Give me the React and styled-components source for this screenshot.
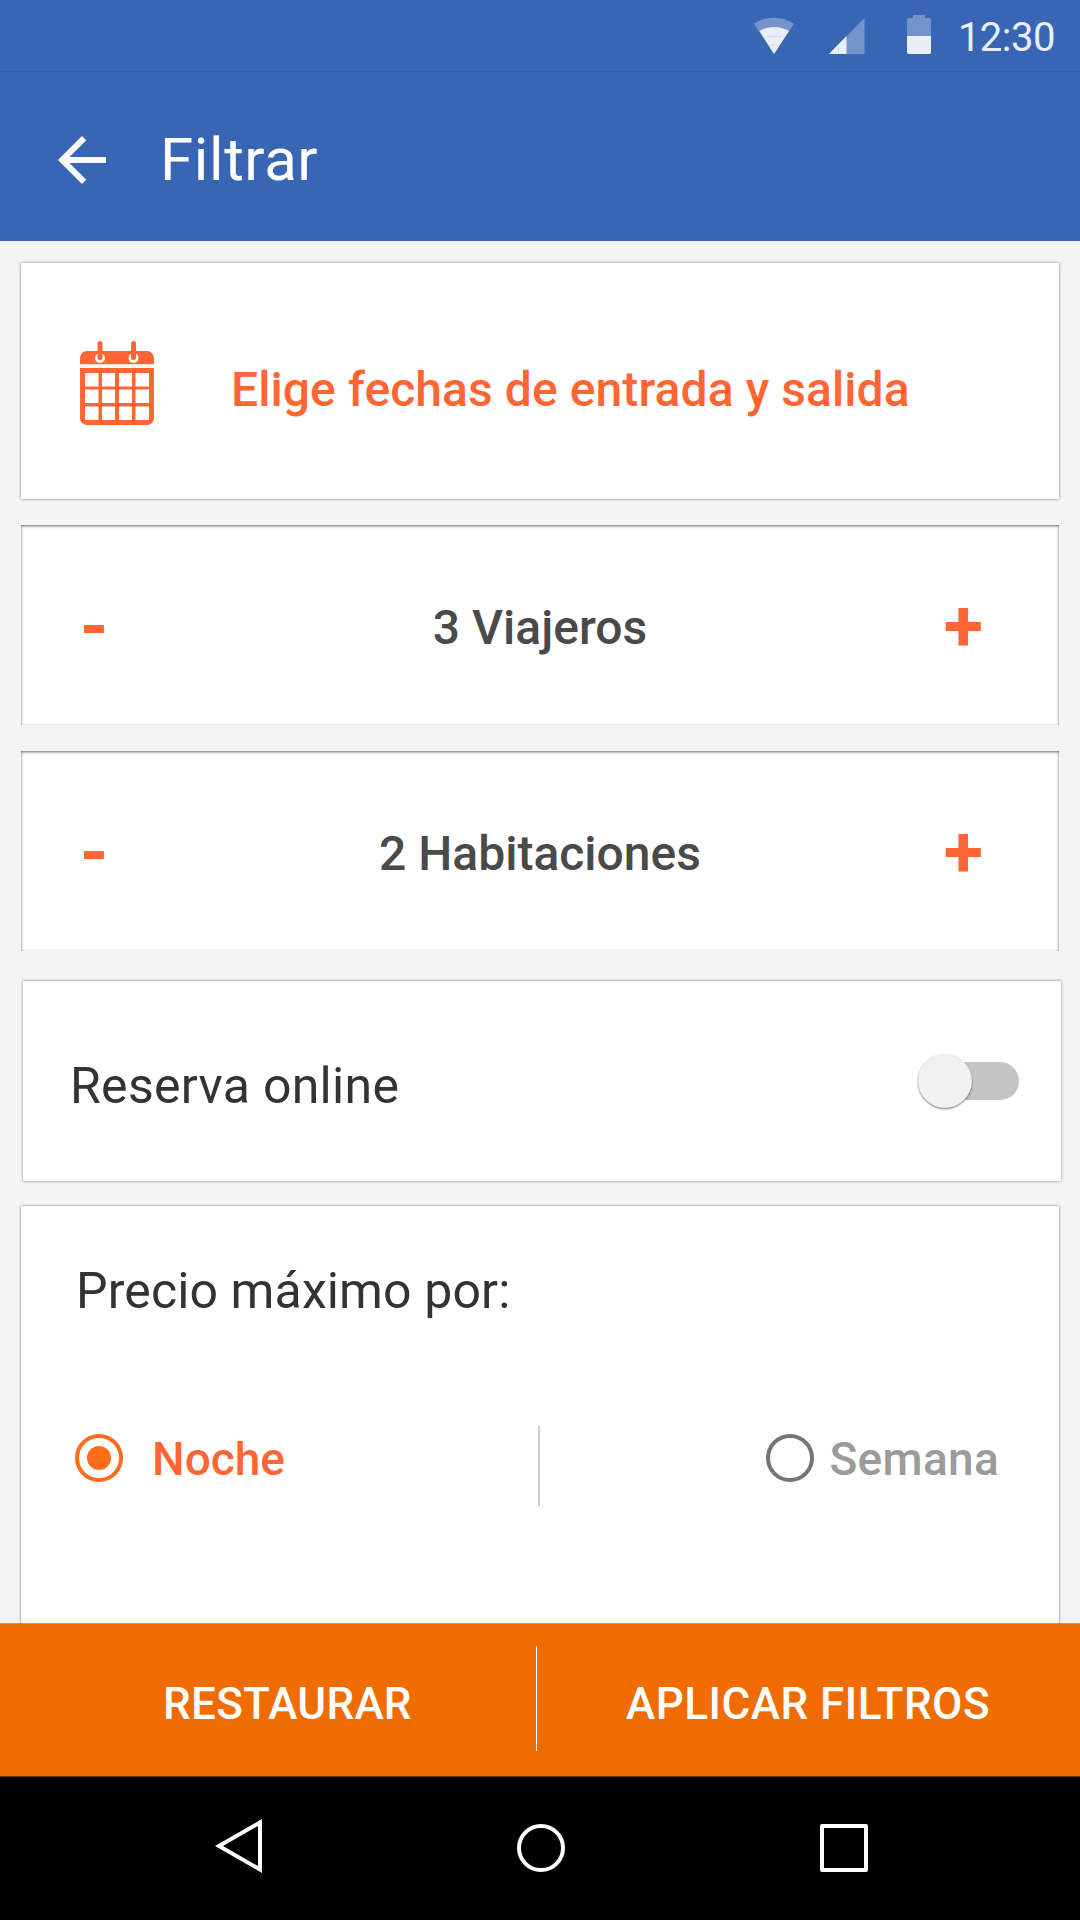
import React, { useState } from 'react';
import styled, { createGlobalStyle } from 'styled-components';

const GlobalStyle = createGlobalStyle`
  * {
    box-sizing: border-box;
  }

  body {
    margin: 0;
    font-family: Roboto, sans-serif;
  }

  button {
    padding: 0;
    border: none;
    background: none;
    font-family: inherit;
    cursor: pointer;
  }

  svg {
    display: block;
  }
`;

const Screen = styled.div`
  width: 1080px;
  height: 1920px;
  display: flex;
  flex-direction: column;
  background: #f4f4f4;
  overflow: hidden;
`;

const StatusBar = styled.div`
  flex: none;
  height: 72px;
  display: flex;
  align-items: flex-start;
  justify-content: flex-end;
  padding-right: 25px;
  background: #3966b4;
  border-bottom: 1px solid #305ba9;
`;

const StatusIcons = styled.svg`
  width: 177px;
  height: 60px;
  margin-right: 27px;
`;

const Clock = styled.span`
  color: #e9eef7;
  font-size: 40px;
  line-height: 48px;
  letter-spacing: -0.5px;
  margin-top: 14px;
`;

const AppBar = styled.header`
  flex: none;
  height: 169px;
  display: flex;
  align-items: center;
  padding: 5px 46px 0;
  background: #3966b4;
`;

const BackButton = styled.button`
  width: 72px;
  height: 72px;
  margin: 2px 42px 0 0;
`;

const Title = styled.h1`
  margin: 0;
  color: #fff;
  font-size: 60px;
  font-weight: 400;
  letter-spacing: 0.6px;
`;

const Content = styled.main`
  flex: 1;
  min-height: 0;
  padding: 22px 21px 0;
  overflow: hidden;
`;

const Card = styled.section`
  background: #fff;
  border-radius: 1px;
  box-shadow: 0 0 3px rgba(0, 0, 0, 0.5);
`;

const DatesCard = styled(Card)`
  height: 236px;
  display: flex;
  align-items: flex-start;
  padding: 78px 59px 0;
`;

const DatesLabel = styled.span`
  margin: 21px 0 0 77px;
  color: #ff6633;
  font-size: 48px;
  font-weight: 500;
  line-height: 56px;
  letter-spacing: 0.08px;
`;

const StepperCard = styled.section`
  height: 200px;
  margin-top: 26px;
  display: grid;
  grid-template-columns: 1fr auto 1fr;
  align-items: center;
  padding: 4px 59px 0;
  background: #fff;
  box-shadow: inset 0 1px 3px rgba(0, 0, 0, 0.6);
`;

const StepButton = styled.button`
  justify-self: ${({ $end }) => ($end ? 'end' : 'start')};
  margin-right: ${({ $end }) => ($end ? '17px' : 0)};
  color: #ff6633;
  font-size: 72px;
  font-weight: 700;
  line-height: 84px;
`;

const StepValue = styled.span`
  color: #4a4a4a;
  font-size: 48px;
  font-weight: 500;
`;

const SwitchCard = styled(Card)`
  height: 200px;
  margin: 30px -2px 0 2px;
  display: flex;
  align-items: center;
  justify-content: space-between;
  padding: 0 42px 0 47px;
`;

const SettingLabel = styled.span`
  color: #333;
  font-size: 50px;
  line-height: 60px;
  letter-spacing: ${({ $spacing }) => $spacing}px;
`;

const SwitchLabel = styled(SettingLabel)`
  padding-top: 10px;
`;

const Track = styled.button`
  width: 96px;
  height: 38px;
  display: flex;
  align-items: center;
  justify-content: ${({ $on }) => ($on ? 'flex-end' : 'flex-start')};
  border-radius: 19px;
  background: #c4c4c4;
`;

const Thumb = styled.span`
  flex: none;
  width: 54px;
  height: 54px;
  margin: 0 -5px;
  border-radius: 50%;
  background: #f0f0f0;
  box-shadow: 0 1px 2px rgba(0, 0, 0, 0.55);
`;

const PriceCard = styled(Card)`
  height: 460px;
  margin-top: 25px;
  padding: 55px 60px 0 54px;
`;

const PriceLabel = styled(SettingLabel)`
  display: block;
  padding-left: 1px;
`;

const RadioRow = styled.div`
  display: flex;
  justify-content: space-between;
  margin-top: 105px;
`;

const RadioOption = styled.button`
  height: 48px;
  margin-top: 8px;
  display: flex;
  align-items: center;
  gap: ${({ $gap }) => $gap}px;
  color: ${({ $active }) => ($active ? '#ff6633' : '#9b9b9b')};
  font-size: 46px;
  font-weight: 500;
  line-height: 50px;
  letter-spacing: ${({ $spacing }) => $spacing || 0}px;
`;

const RadioMark = styled.span`
  width: 48px;
  height: 48px;
  display: flex;
  align-items: center;
  justify-content: center;
  border: 4px solid ${({ $active }) => ($active ? '#ff6c1a' : '#757575')};
  border-radius: 50%;

  &::after {
    content: '';
    width: 24px;
    height: 24px;
    border-radius: 50%;
    background: ${({ $active }) => ($active ? '#ff6c1a' : 'transparent')};
  }
`;

const RadioText = styled.span`
  padding-top: 2px;
`;

const RadioDivider = styled.span`
  width: 2px;
  height: 80px;
  margin-left: 26px;
  background: #cbcbcb;
`;

const ActionBar = styled.footer`
  flex: none;
  height: 154px;
  display: flex;
  align-items: center;
  background: #f06c00;
  border-top: 1px solid #f38a36;
  border-bottom: 1px solid #783600;
`;

const ActionButton = styled.button`
  flex: ${({ $grow }) => $grow};
  padding: ${({ $pad }) => $pad};
  color: #fff;
  font-size: 44px;
  font-weight: 500;
  letter-spacing: ${({ $spacing }) => $spacing}px;
  text-align: left;
`;

const ActionDivider = styled.span`
  width: 1px;
  height: 105px;
  margin-bottom: 3px;
  background: #fff;
`;

const NavBar = styled.nav`
  flex: none;
  height: 143px;
  display: flex;
  align-items: flex-start;
  justify-content: space-between;
  padding: 42px 212px 0 215px;
  background: #000;
`;

const WifiSignalBattery = () => (
  <StatusIcons viewBox="0 0 177 60">
    <g fill="#7493ca">
      <path d="M0 24C12 15.500 28 15.500 40 24L20 54Z" />
      <path d="M75 54L110.500 18V54Z" />
      <path d="M159 15h12v3h4a2 2 0 0 1 2 2v32a2 2 0 0 1-2 2h-20a2 2 0 0 1-2-2V20a2 2 0 0 1 2-2h4z" />
    </g>
    <g fill="#e9eef7">
      <path d="M5.500 31C14 25.500 26 25.500 35 31L20 54Z" />
      <path d="M75 54L92.500 36V54Z" />
      <path d="M153 36h24v16a2 2 0 0 1-2 2h-20a2 2 0 0 1-2-2z" />
    </g>
    <path d="M13 37q7-1.500 14 0M15.500 45.500q4.500-1 9 0M84.500 46V54" fill="none" stroke="#c3d0e8" strokeWidth="0.7" />
  </StatusIcons>
);

const BackArrow = () => (
  <svg width="72" height="72" viewBox="0 0 24 24" fill="#fff">
    <path d="M20 11H7.830l5.590-5.590L12 4l-8 8 8 8 1.410-1.410L7.830 13H20v-2z" />
  </svg>
);

const CalendarIcon = () => (
  <svg width="74" height="84" viewBox="0 0 74 84">
    <path d="M0 23.300V17a7 7 0 0 1 7-7h60a7 7 0 0 1 7 7v6.300z" fill="#ff6633" />
    <path
      d="M0 27h74v50a7 7 0 0 1-7 7H7a7 7 0 0 1-7-7zM5 32v13.500h13.500V32zM22 32v13.500h13V32zM39 32v13.500h13V32zM55.500 32v13.500H69V32zM5 48.500v13.500h13.500V48.500zM22 48.500v13.500h13V48.500zM39 48.500v13.500h13V48.500zM55.500 48.500v13.500H69V48.500zM5 65.500V79h13.500V65.500zM22 65.500V79h13V65.500zM39 65.500V79h13V65.500zM55.500 65.500V79H69V65.500z"
      fill="#ff6633"
      fillRule="evenodd"
    />
    <circle cx="20" cy="17" r="5" fill="#fff" />
    <circle cx="53.500" cy="17" r="5" fill="#fff" />
    <path d="M20 2.500V16.500M53.500 2.500V16.500" stroke="#ff6633" strokeWidth="5" strokeLinecap="round" />
    <path d="M14 10h12v2.500H14zM47.500 10h12v2.500h-12z" fill="#ff6633" />
  </svg>
);

const Stepper = ({ initial, label }) => {
  const [count, setCount] = useState(initial);

  return (
    <StepperCard>
      <StepButton onClick={() => setCount(Math.max(1, count - 1))}>-</StepButton>
      <StepValue>{count} {label}</StepValue>
      <StepButton $end onClick={() => setCount(count + 1)}>+</StepButton>
    </StepperCard>
  );
};

const App = () => {
  const [online, setOnline] = useState(false);
  const [period, setPeriod] = useState('noche');

  return (
    <>
      <GlobalStyle />
      <Screen>
        <StatusBar>
          <WifiSignalBattery />
          <Clock>12:30</Clock>
        </StatusBar>
        <AppBar>
          <BackButton aria-label="Volver">
            <BackArrow />
          </BackButton>
          <Title>Filtrar</Title>
        </AppBar>

        <Content>
          <DatesCard>
            <CalendarIcon />
            <DatesLabel>Elige fechas de entrada y salida</DatesLabel>
          </DatesCard>

          <Stepper initial={3} label="Viajeros" />
          <Stepper initial={2} label="Habitaciones" />

          <SwitchCard>
            <SwitchLabel $spacing={0.3}>Reserva online</SwitchLabel>
            <Track $on={online} onClick={() => setOnline(!online)} aria-label="Reserva online">
              <Thumb />
            </Track>
          </SwitchCard>

          <PriceCard>
            <PriceLabel $spacing={0.12}>Precio máximo por:</PriceLabel>
            <RadioRow>
              <RadioOption $active={period === 'noche'} $gap={29} onClick={() => setPeriod('noche')}>
                <RadioMark $active={period === 'noche'} />
                <RadioText>Noche</RadioText>
              </RadioOption>
              <RadioDivider />
              <RadioOption
                $active={period === 'semana'}
                $gap={15}
                $spacing={0.3}
                onClick={() => setPeriod('semana')}
              >
                <RadioMark $active={period === 'semana'} />
                <RadioText>Semana</RadioText>
              </RadioOption>
            </RadioRow>
          </PriceCard>
        </Content>

        <ActionBar>
          <ActionButton $grow="0 0 536px" $pad="7px 0 0 163px" $spacing={0.3}>RESTAURAR</ActionButton>
          <ActionDivider />
          <ActionButton $grow="1" $pad="7px 0 0 89px" $spacing={0.5}>APLICAR FILTROS</ActionButton>
        </ActionBar>

        <NavBar>
          <svg width="47" height="54" viewBox="0 0 47 54" fill="none" stroke="#fff" strokeWidth="4">
            <path d="M45 3.500V50.500L4 27Z" />
          </svg>
          <svg width="48" height="58" viewBox="0 0 48 58" fill="none" stroke="#fff" strokeWidth="4">
            <circle cx="24" cy="29" r="22" />
          </svg>
          <svg width="48" height="58" viewBox="0 0 48 58" fill="none" stroke="#fff" strokeWidth="4">
            <rect x="2" y="7" width="44" height="44" strokeLinejoin="round" />
          </svg>
        </NavBar>
      </Screen>
    </>
  );
};

export default App;
